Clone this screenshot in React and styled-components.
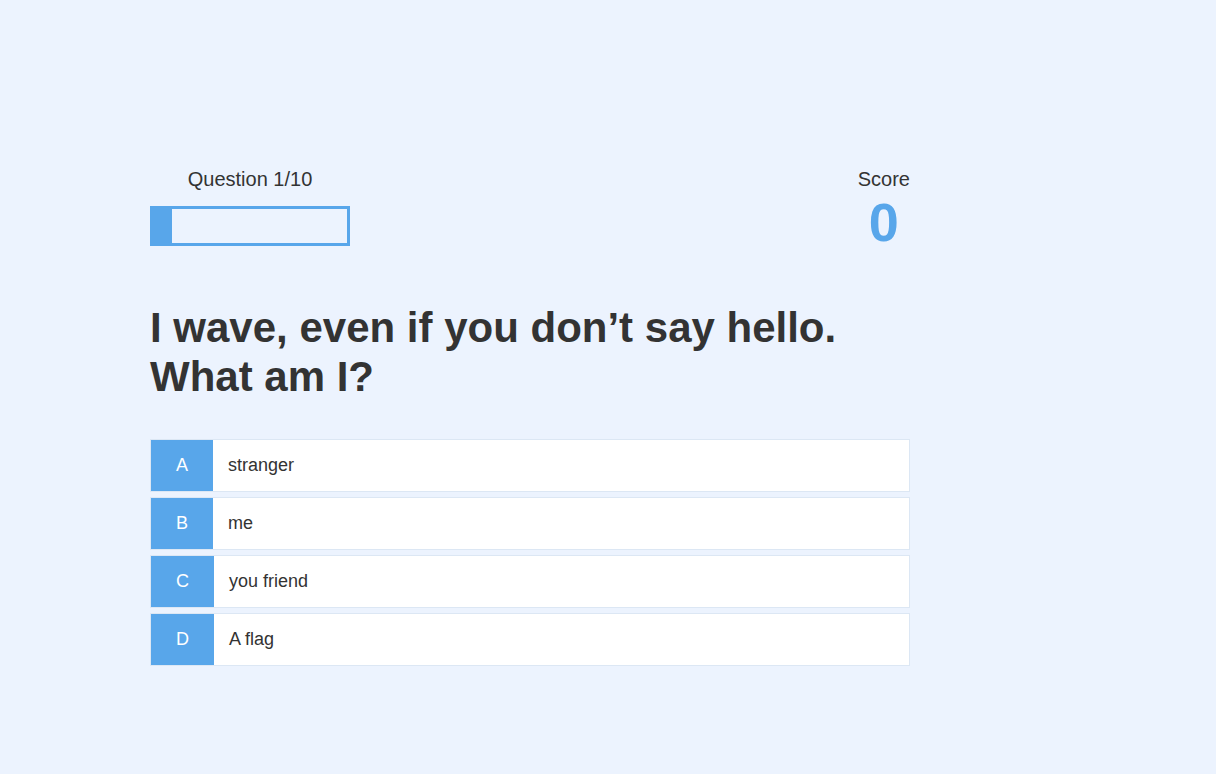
import React from 'react';
import styled, { createGlobalStyle } from 'styled-components';

const GlobalStyle = createGlobalStyle`
  html, body {
    margin: 0;
    padding: 0;
    background: #ecf3fe;
    font-family: 'Liberation Sans', Arial, sans-serif;
    color: #333;
  }
`;

const Page = styled.div`
  min-height: 774px;
  padding: 168px 0 0 150px;
  box-sizing: border-box;
`;

const Quiz = styled.div`
  width: 760px;
`;

const Header = styled.div`
  display: flex;
  justify-content: space-between;
  align-items: flex-start;
`;

const Progress = styled.div`
  display: flex;
  flex-direction: column;
  align-items: center;
  width: 200px;
`;

const Label = styled.div`
  font-size: 20px;
  line-height: 23px;
  color: #333;
`;

const Bar = styled.div`
  margin-top: 15px;
  width: 200px;
  height: 40px;
  box-sizing: border-box;
  border: 3px solid #58a6ea;
`;

const Fill = styled.div`
  height: 100%;
  background: #58a6ea;
`;

const Score = styled.div`
  display: flex;
  flex-direction: column;
  align-items: center;
`;

const ScoreValue = styled.div`
  font-size: 54px;
  font-weight: bold;
  line-height: 62px;
  color: #58a6ea;
`;

const Question = styled.h1`
  margin: 50px 0 38px;
  font-size: 42px;
  line-height: 49px;
  font-weight: bold;
  color: #333;
`;

const Options = styled.div`
  display: flex;
  flex-direction: column;
  gap: 5px;
`;

const Option = styled.div`
  display: flex;
  height: 53px;
  box-sizing: border-box;
  border: 1px solid #dce7f4;
  background: #fff;
  cursor: pointer;
`;

const Letter = styled.div`
  display: flex;
  align-items: center;
  padding: 0 25px;
  background: #58a6ea;
  color: #fff;
  font-size: 18px;
`;

const Answer = styled.div`
  display: flex;
  align-items: center;
  padding-left: 15px;
  font-size: 18px;
  color: #333;
`;

const answers = [
  ['A', 'stranger'],
  ['B', 'me'],
  ['C', 'you friend'],
  ['D', 'A flag'],
];

export default function App() {
  const current = 1;
  const total = 10;
  return (
    <>
      <GlobalStyle />
      <Page>
        <Quiz>
          <Header>
            <Progress>
              <Label>Question {current}/{total}</Label>
              <Bar>
                <Fill style={{ width: `${(current / total) * 100}%` }} />
              </Bar>
            </Progress>
            <Score>
              <Label>Score</Label>
              <ScoreValue>0</ScoreValue>
            </Score>
          </Header>
          <Question>
            I wave, even if you don’t say hello.
            <br />
            What am I?
          </Question>
          <Options>
            {answers.map(([letter, text]) => (
              <Option key={letter}>
                <Letter>{letter}</Letter>
                <Answer>{text}</Answer>
              </Option>
            ))}
          </Options>
        </Quiz>
      </Page>
    </>
  );
}
